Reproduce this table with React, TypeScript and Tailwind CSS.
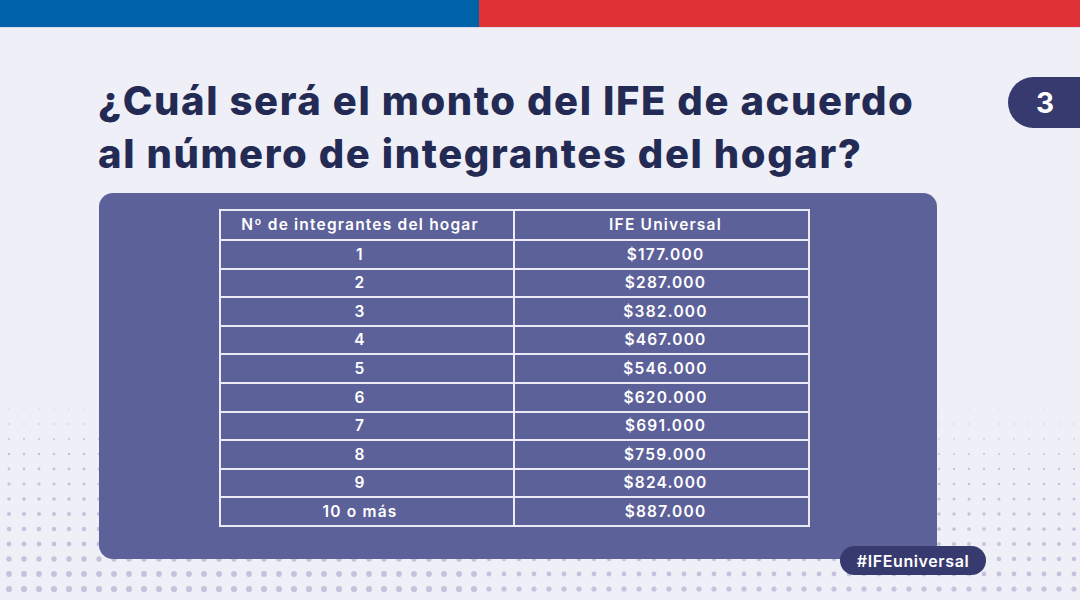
import React from 'react';

const rows: [string, string][] = [
  ['1', '$177.000'],
  ['2', '$287.000'],
  ['3', '$382.000'],
  ['4', '$467.000'],
  ['5', '$546.000'],
  ['6', '$620.000'],
  ['7', '$691.000'],
  ['8', '$759.000'],
  ['9', '$824.000'],
  ['10 o más', '$887.000'],
];

function Dots() {
  const dots: React.ReactNode[] = [];
  for (let y = 409; y <= 595; y += 15) {
    const t = (y - 405) / 185;
    for (let x = 9; x < 1080; x += 15) {
      const right = x > 480;
      const r = right ? 0.4 + t * 2.2 : 0.5 + t * 2.6;
      dots.push(<circle key={`${x}-${y}`} cx={x} cy={y} r={r} fill="#c4c2dc" />);
    }
  }
  return (
    <svg className="absolute left-0 top-0" width={1080} height={600}>
      {dots}
    </svg>
  );
}

export default function App() {
  return (
    <div
      className="relative w-[1080px] h-[600px] overflow-hidden bg-[#efeff7]"
      style={{ fontFamily: 'Inter, "Noto Sans", sans-serif' }}
    >
      <Dots />
      <div className="relative flex flex-col h-full">
        {/* Top flag bar */}
        <div className="flex h-[28px] border-b border-[#d9dcec]">
          <div className="w-[479px] bg-[#0062a8]" />
          <div className="flex-1 bg-[#e03236]" />
        </div>

        <div className="flex items-start justify-between pt-[46px]">
          <h1 className="pl-[98px] text-[40px] leading-[53px] font-extrabold tracking-[1.6px] text-[#232b55]">
            ¿Cuál será el monto del IFE de acuerdo
            <br />
            al número de integrantes del hogar?
          </h1>
          <div className="mt-[3px] flex h-[51px] w-[72px] items-center pl-[28px] rounded-l-full bg-[#363a6e] text-[28px] font-bold text-white">
            3
          </div>
        </div>

        <div className="ml-[99px] mt-[13px] w-[838px] h-[366px] rounded-[14px] bg-[#5d6199] pt-[16px] pl-[120px]">
          <table className="w-[591px] border-collapse text-white text-[15.5px] tracking-[1.2px] font-semibold">
            <thead>
              <tr className="h-[30px]">
                <th className="border-2 border-[#eceaf7] w-[294px] pr-[14px] font-semibold">Nº de integrantes del hogar</th>
                <th className="border-2 border-[#eceaf7] pl-[8px] font-semibold">IFE Universal</th>
              </tr>
            </thead>
            <tbody>
              {rows.map(([n, v]) => (
                <tr key={n} className="h-[28.6px]">
                  <td className="border-2 border-[#eceaf7] text-center pr-[14px]">{n}</td>
                  <td className="border-2 border-[#eceaf7] text-center pl-[8px]">{v}</td>
                </tr>
              ))}
            </tbody>
          </table>
        </div>

        <div className="flex justify-end pr-[94px] -mt-[13px]">
          <div className="flex h-[29px] w-[146px] items-center justify-center rounded-full bg-[#363a6e] text-[16px] tracking-[0.6px] font-semibold text-white">
            #IFEuniversal
          </div>
        </div>
      </div>
    </div>
  );
}
